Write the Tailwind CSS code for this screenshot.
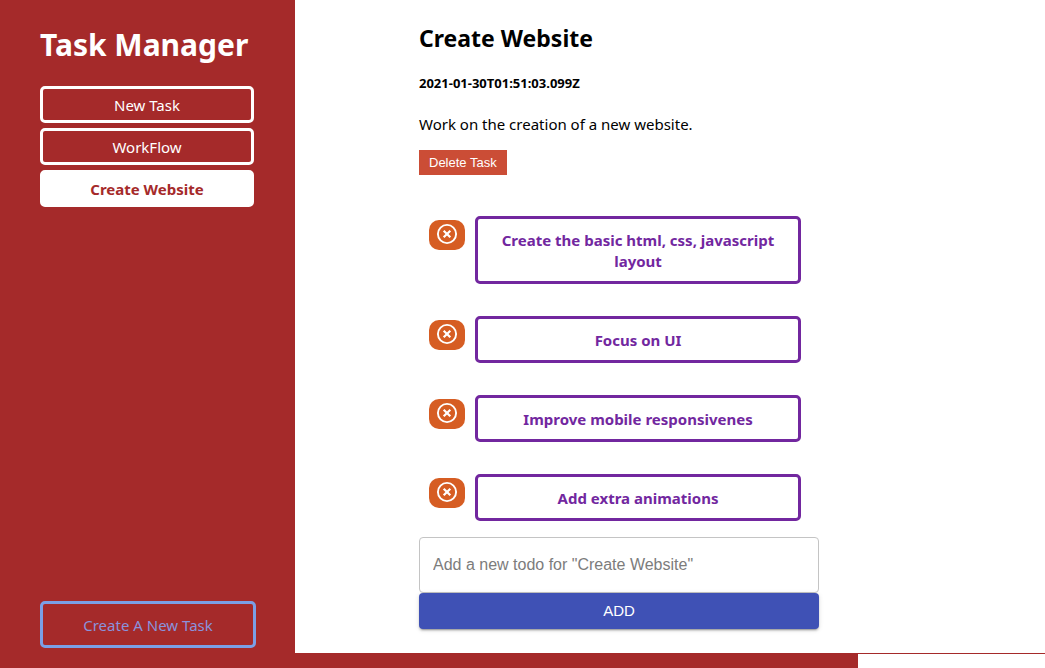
<!DOCTYPE html>
<html lang="en">
<head>
<meta charset="utf-8">
<meta name="viewport" content="width=device-width, initial-scale=1">
<title>Task Manager</title>
<script src="https://cdn.jsdelivr.net/npm/@tailwindcss/browser@4"></script>
</head>
<body class="flex min-h-screen flex-col bg-white font-['Noto_Sans','Open_Sans',sans-serif] text-[15px] text-black">
  <svg class="hidden" aria-hidden="true">
    <symbol id="remove" viewBox="0 0 22 22">
      <circle cx="11" cy="11" r="9.1" fill="none" stroke="currentColor" stroke-width="1.9"/>
      <path d="M7.7 7.7l6.6 6.6M14.3 7.7l-6.6 6.6" fill="none" stroke="currentColor" stroke-width="2.2"/>
    </symbol>
  </svg>
  <div class="flex flex-1">
    <aside class="flex w-[295px] shrink-0 flex-col bg-[#a52a2a] px-10 pt-6 pb-[5px] text-white">
      <h1 class="text-[30px] leading-[42px] font-bold whitespace-nowrap">Task Manager</h1>
      <nav class="mt-5 mr-px flex flex-col gap-[5px]">
        <button type="button" class="h-[37px] rounded-[5px] border-3 border-white pt-0.5">New Task</button>
        <button type="button" class="h-[37px] rounded-[5px] border-3 border-white pt-0.5">WorkFlow</button>
        <button type="button" class="h-[37px] rounded-[5px] border-3 border-white bg-white pt-0.5 font-bold text-[#a52a2a]">Create Website</button>
      </nav>
      <button type="button" class="mt-auto h-[47px] w-[216px] rounded-[5px] border-3 border-[#7b9fe6] pt-0.5 text-[#8a92dc]">Create A New Task</button>
    </aside>
    <main class="flex-1 pt-[22px] pl-[124px]">
      <div class="w-[400px] max-w-full">
        <h2 class="text-[23px] leading-8 font-bold">Create Website</h2>
        <h5 class="mt-5 text-[13px] leading-[18px] font-bold">2021-01-30T01:51:03.099Z</h5>
        <p class="mt-[22px] leading-[21px]">Work on the creation of a new website.</p>
        <button type="button" class="mt-[15px] block h-[25px] bg-[#cb4d36] px-2.5 font-['Liberation_Sans',sans-serif] text-[13px] text-white">Delete Task</button>
        <ul class="mt-[41px] flex flex-col gap-8 pr-[18px] pl-2.5 font-bold text-[#72279f]">
          <li class="flex items-start gap-2.5">
            <button type="button" aria-label="Remove todo" class="mt-1 flex h-[30px] w-9 shrink-0 justify-center rounded-[10px] bg-[#d65d23] pt-[3px] text-white"><svg class="size-[22px]"><use href="#remove"/></svg></button>
            <div class="flex-1 rounded-[5px] border-3 border-[#72279f] px-5 pt-[11px] pb-[9px] text-center leading-[21px]">Create the basic html, css, javascript layout</div>
          </li>
          <li class="flex items-start gap-2.5">
            <button type="button" aria-label="Remove todo" class="mt-1 flex h-[30px] w-9 shrink-0 justify-center rounded-[10px] bg-[#d65d23] pt-[3px] text-white"><svg class="size-[22px]"><use href="#remove"/></svg></button>
            <div class="flex-1 rounded-[5px] border-3 border-[#72279f] px-5 pt-[11px] pb-[9px] text-center leading-[21px]">Focus on UI</div>
          </li>
          <li class="flex items-start gap-2.5">
            <button type="button" aria-label="Remove todo" class="mt-1 flex h-[30px] w-9 shrink-0 justify-center rounded-[10px] bg-[#d65d23] pt-[3px] text-white"><svg class="size-[22px]"><use href="#remove"/></svg></button>
            <div class="flex-1 rounded-[5px] border-3 border-[#72279f] px-5 pt-[11px] pb-[9px] text-center leading-[21px]">Improve mobile responsivenes</div>
          </li>
          <li class="flex items-start gap-2.5">
            <button type="button" aria-label="Remove todo" class="mt-1 flex h-[30px] w-9 shrink-0 justify-center rounded-[10px] bg-[#d65d23] pt-[3px] text-white"><svg class="size-[22px]"><use href="#remove"/></svg></button>
            <div class="flex-1 rounded-[5px] border-3 border-[#72279f] px-5 pt-[11px] pb-[9px] text-center leading-[21px]">Add extra animations</div>
          </li>
        </ul>
        <form class="mt-4 mb-6 font-['Liberation_Sans',sans-serif]">
          <input type="text" aria-label="New todo" placeholder="Add a new todo for &quot;Create Website&quot;" class="block h-14 w-full rounded border border-[#c4c4c4] px-[13px] text-base placeholder:text-[#7c7c7c]">
          <button type="button" class="block h-9 w-full rounded bg-[#3f51b5] text-[15px] text-white shadow-[0_3px_1px_-2px_rgba(0,0,0,0.2),0_2px_2px_0_rgba(0,0,0,0.14),0_1px_5px_0_rgba(0,0,0,0.12)]">ADD</button>
        </form>
      </div>
    </main>
  </div>
  <footer class="h-[15px] border-t border-[#a52a2a]">
    <div class="h-full w-[858px] max-w-full bg-[#a52a2a]"></div>
  </footer>
</body>
</html>
